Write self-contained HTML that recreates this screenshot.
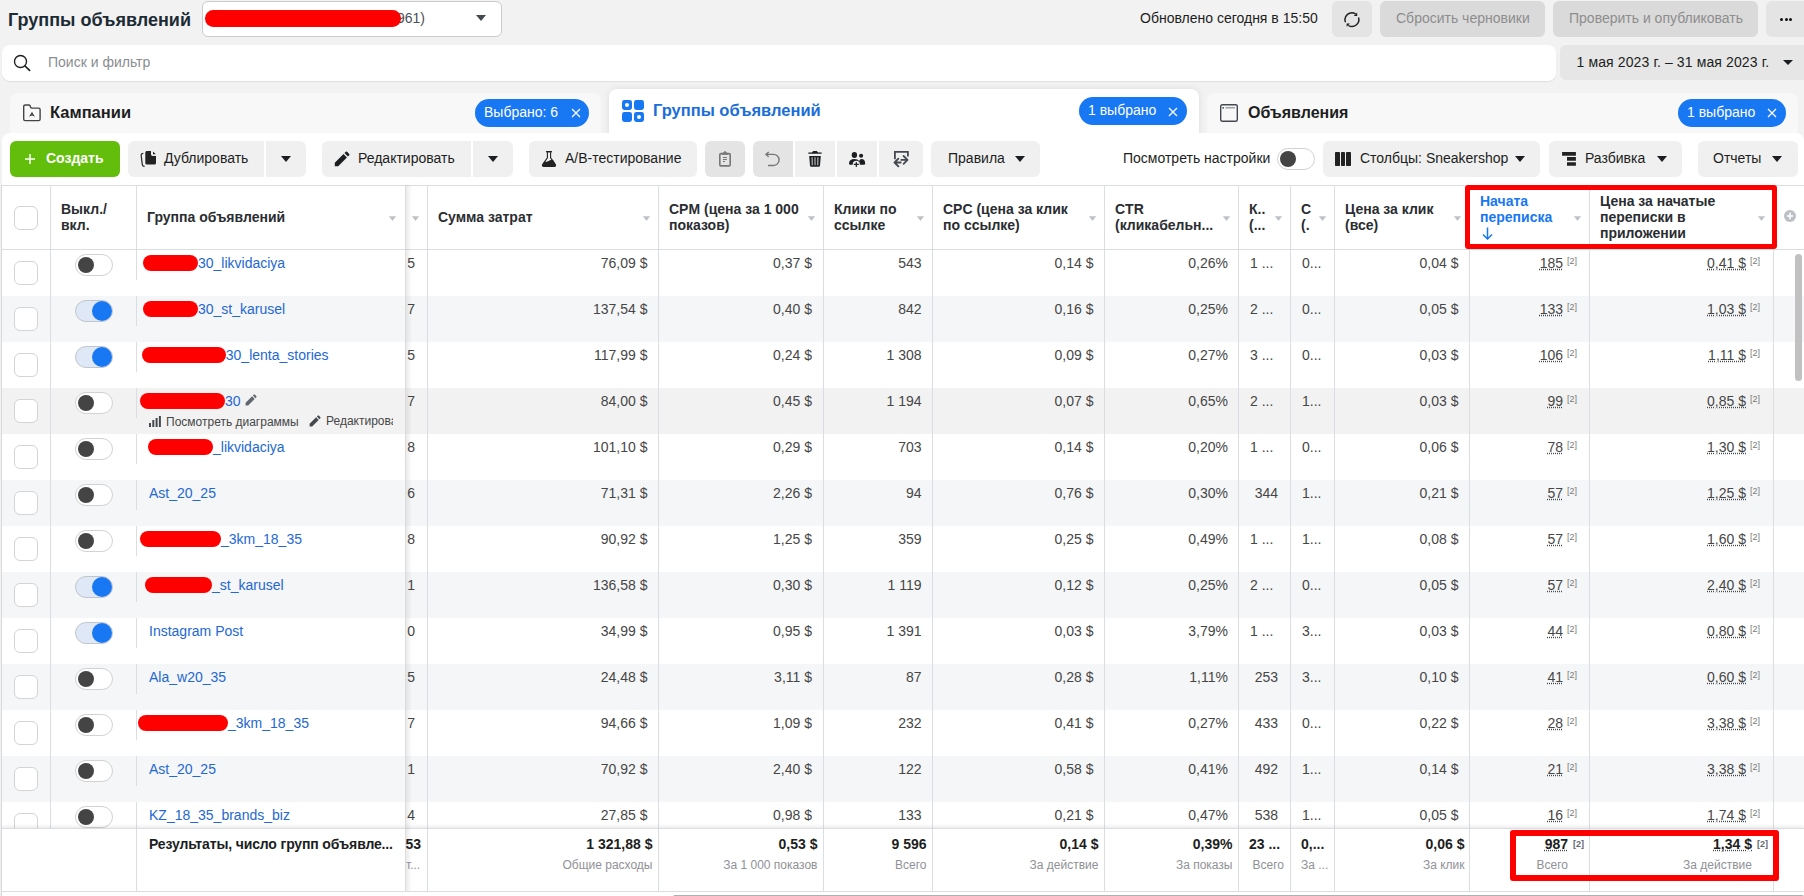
<!DOCTYPE html>
<html><head><meta charset="utf-8">
<style>
*{box-sizing:border-box;margin:0;padding:0}
html,body{width:1804px;height:896px;overflow:hidden;background:#f2f2f2;font-family:"Liberation Sans",sans-serif;color:#1c1e21;position:relative}
.a{position:absolute}
.t{position:absolute;white-space:nowrap}
</style></head><body>

<div class="t" style="left:8px;top:10.8px;font-size:18px;line-height:18px;font-weight:700;color:#1c2b33;">Группы объявлений</div>
<div class="a" style="left:202px;top:1px;width:300px;height:36px;background:#fff;border:1px solid #cccccc;border-radius:6px"></div>
<div class="t" style="left:397px;top:11.1px;font-size:14px;line-height:14px;font-weight:400;color:#4b4f56;">961)</div>
<div class="a" style="left:205px;top:10.3px;width:196px;height:16.3px;background:#f00;border-radius:8.2px"></div>
<svg class="a" style="left:476.0px;top:15.0px" width="10" height="6" viewBox="0 0 10 6"><path d="M0 0H10L5.0 6Z" fill="#444950"/></svg>
<div class="t" style="left:1140px;top:11.1px;font-size:14px;line-height:14px;font-weight:400;color:#1c1e21;">Обновлено сегодня в 15:50</div>
<div class="a" style="left:1332px;top:1px;width:40px;height:36px;background:#e4e4e4;border-radius:6px"></div>
<svg class="a" style="left:1343px;top:10.5px" width="18" height="18" viewBox="0 0 18 18"><path d="M2.5 11.3A6.9 6.9 0 0 1 12.6 2.9" fill="none" stroke="#1c1e21" stroke-width="1.45"/><path d="M15.5 6.5A6.9 6.9 0 0 1 5.4 14.5" fill="none" stroke="#1c1e21" stroke-width="1.45"/><path d="M14.2 1.6V5H10.8Z" fill="#1c1e21"/><path d="M3.6 15.8V12.4H7Z" fill="#1c1e21"/></svg>
<div class="a" style="left:1380px;top:1px;width:165px;height:36px;background:#dadada;border-radius:6px"></div>
<div class="t" style="left:1396px;top:11.1px;font-size:14px;line-height:14px;font-weight:400;color:#8d8d8d;">Сбросить черновики</div>
<div class="a" style="left:1553px;top:1px;width:205px;height:36px;background:#dadada;border-radius:6px"></div>
<div class="t" style="left:1569px;top:11.1px;font-size:14px;line-height:14px;font-weight:400;color:#8d8d8d;">Проверить и опубликовать</div>
<div class="a" style="left:1766px;top:1px;width:60px;height:36px;background:#e4e4e4;border-radius:6px"></div>
<div class="a" style="left:1780px;top:17.5px;width:3px;height:3px;background:#111;border-radius:50%"></div>
<div class="a" style="left:1784.6px;top:17.5px;width:3px;height:3px;background:#111;border-radius:50%"></div>
<div class="a" style="left:1789.2px;top:17.5px;width:3px;height:3px;background:#111;border-radius:50%"></div>
<div class="a" style="left:2px;top:45px;width:1554px;height:36px;background:#fff;border-radius:8px;box-shadow:0 1px 1px rgba(0,0,0,.08)"></div>
<svg class="a" style="left:13px;top:54px" width="19" height="19" viewBox="0 0 19 19"><circle cx="7.5" cy="7.5" r="6" fill="none" stroke="#1c1e21" stroke-width="1.35"/><path d="M12 12L16.6 16.3" stroke="#1c1e21" stroke-width="1.7" stroke-linecap="round"/></svg>
<div class="t" style="left:48px;top:55.1px;font-size:14px;line-height:14px;font-weight:400;color:#8a8d91;">Поиск и фильтр</div>
<div class="a" style="left:1560px;top:45px;width:260px;height:35px;background:#e6e6e6;border-radius:6px"></div>
<div class="t" style="left:1576.5px;top:55.1px;font-size:14px;line-height:14px;font-weight:400;color:#1c1e21;letter-spacing:0.12px">1 мая 2023 г. – 31 мая 2023 г.</div>
<svg class="a" style="left:1783.0px;top:59.5px" width="10" height="5" viewBox="0 0 10 5"><path d="M0 0H10L5.0 5Z" fill="#1c1e21"/></svg>
<div class="a" style="left:10px;top:93px;width:591px;height:45px;background:#f8f8f8;border-radius:8px 8px 0 0;box-shadow:inset 0 -5px 5px -3px rgba(0,0,0,.05)"></div>
<div class="a" style="left:609px;top:89px;width:590px;height:50px;background:#fff;border-radius:8px 8px 0 0;box-shadow:0 0 6px rgba(0,0,0,.09)"></div>
<div class="a" style="left:1207px;top:93px;width:591px;height:45px;background:#f8f8f8;border-radius:8px 8px 0 0;box-shadow:inset 0 -5px 5px -3px rgba(0,0,0,.05)"></div>
<div class="a" style="left:2px;top:133px;width:1802px;height:763px;background:#fff;border-radius:8px 8px 0 0"></div>
<div class="a" style="left:609px;top:125px;width:590px;height:12px;background:#fff;"></div>
<svg class="a" style="left:22px;top:103px" width="20" height="20" viewBox="0 0 20 20"><path d="M1.7 3.4Q1.7 1.95 3.15 1.95H6.9Q7.6 1.95 8 2.6L8.7 4.4Q9 5.1 9.8 5.1H16.65Q18.1 5.1 18.1 6.55V16.15Q18.1 17.6 16.65 17.6H3.15Q1.7 17.6 1.7 16.15Z" fill="none" stroke="#444" stroke-width="1.4"/><path d="M7 13.75L10 8.75L12.9 13.75L10 12.4Z" fill="#444"/></svg>
<div class="t" style="left:50px;top:104.0px;font-size:16.5px;line-height:16.5px;font-weight:700;color:#1c1e21;">Кампании</div>
<div class="a" style="left:475px;top:99px;width:114px;height:28px;background:#1877f2;border-radius:14px"></div>
<div class="t" style="left:484px;top:104.6px;font-size:14px;line-height:14px;font-weight:400;color:#fff;">Выбрано: 6</div>
<svg class="a" style="left:570.5px;top:108px" width="10" height="10" viewBox="0 0 10 10"><path d="M1 1L9 9M9 1L1 9" stroke="#fff" stroke-width="1.25"/></svg>
<svg class="a" style="left:621px;top:99px" width="24" height="24" viewBox="0 0 24 24"><rect x="1" y="1" width="10" height="10" rx="2.4" fill="#1877f2"/><rect x="13" y="1" width="10" height="10" rx="2.4" fill="#1877f2"/><rect x="1" y="13" width="10" height="10" rx="2.4" fill="#1877f2"/><rect x="13" y="13" width="10" height="10" rx="2.4" fill="#1877f2"/><circle cx="6" cy="6" r="2" fill="#fff"/><circle cx="18" cy="18" r="2" fill="#fff"/></svg>
<div class="t" style="left:653px;top:102.0px;font-size:16.5px;line-height:16.5px;font-weight:700;color:#1a6ed8;">Группы объявлений</div>
<div class="a" style="left:1079px;top:97px;width:108px;height:28px;background:#1877f2;border-radius:14px"></div>
<div class="t" style="left:1088px;top:102.7px;font-size:14px;line-height:14px;font-weight:400;color:#fff;">1 выбрано</div>
<svg class="a" style="left:1168px;top:106.5px" width="10" height="10" viewBox="0 0 10 10"><path d="M1 1L9 9M9 1L1 9" stroke="#fff" stroke-width="1.25"/></svg>
<svg class="a" style="left:1220px;top:104px" width="18" height="18" viewBox="0 0 18 18"><rect x="0.7" y="0.7" width="16.6" height="16.6" rx="1.5" fill="none" stroke="#444950" stroke-width="1.4"/><circle cx="3.2" cy="3.8" r="0.9" fill="#444950"/><path d="M5.5 3.8H15" stroke="#8a8d91" stroke-width="1.2"/></svg>
<div class="t" style="left:1248px;top:104.5px;font-size:16px;line-height:16px;font-weight:700;color:#1c1e21;">Объявления</div>
<div class="a" style="left:1678px;top:99px;width:108px;height:28px;background:#1877f2;border-radius:14px"></div>
<div class="t" style="left:1687px;top:104.6px;font-size:14px;line-height:14px;font-weight:400;color:#fff;">1 выбрано</div>
<svg class="a" style="left:1767px;top:108px" width="10" height="10" viewBox="0 0 10 10"><path d="M1 1L9 9M9 1L1 9" stroke="#fff" stroke-width="1.25"/></svg>
<div class="a" style="left:10px;top:141px;width:110px;height:36px;background:#63be0c;border-radius:6px"></div>
<svg class="a" style="left:25px;top:154px" width="10" height="10" viewBox="0 0 10 10"><path d="M5 0V10M0 5H10" stroke="#fff" stroke-width="1.5"/></svg>
<div class="t" style="left:46px;top:151.1px;font-size:14px;line-height:14px;font-weight:700;color:#fff;">Создать</div>
<div class="a" style="left:128px;top:141px;width:136px;height:36px;background:#f0f0f0;border-radius:6px 0 0 6px"></div>
<div class="a" style="left:266px;top:141px;width:40px;height:36px;background:#f0f0f0;border-radius:0 6px 6px 0"></div>
<svg class="a" style="left:140px;top:150px" width="17" height="18" viewBox="0 0 17 18"><path d="M5.3 2.6Q5.3 1.1 6.8 1.1H11V4.2Q11 5.9 12.7 5.9H16V13.1Q16 14.6 14.5 14.6H6.8Q5.3 14.6 5.3 13.1Z" fill="#222"/><path d="M13 1.4V4.2H15.8Z" fill="#222"/><path d="M3.3 3.3Q1 3.4 1.2 5.8L2.3 14.6Q2.6 16.4 4.6 16.4" fill="none" stroke="#222" stroke-width="1.2"/></svg>
<div class="t" style="left:164px;top:151.1px;font-size:14px;line-height:14px;font-weight:400;color:#1c1e21;">Дублировать</div>
<svg class="a" style="left:281.0px;top:156.0px" width="10" height="6" viewBox="0 0 10 6"><path d="M0 0H10L5.0 6Z" fill="#1c1e21"/></svg>
<div class="a" style="left:322px;top:141px;width:149px;height:36px;background:#f0f0f0;border-radius:6px 0 0 6px"></div>
<div class="a" style="left:473px;top:141px;width:40px;height:36px;background:#f0f0f0;border-radius:0 6px 6px 0"></div>
<svg class="a" style="left:334px;top:151px" width="16" height="16" viewBox="0 0 16 16"><path d="M0.8 11.8V15.2H4.2L12.9 6.5L9.5 3.1Z M13.9 5.5L15.2 4.2Q15.8 3.5 15.2 2.9L13.1 0.8Q12.5 0.2 11.8 0.8L10.5 2.1Z" fill="#1c1e21"/></svg>
<div class="t" style="left:358px;top:151.1px;font-size:14px;line-height:14px;font-weight:400;color:#1c1e21;">Редактировать</div>
<svg class="a" style="left:488.0px;top:156.0px" width="10" height="6" viewBox="0 0 10 6"><path d="M0 0H10L5.0 6Z" fill="#1c1e21"/></svg>
<div class="a" style="left:529px;top:141px;width:168px;height:36px;background:#f0f0f0;border-radius:6px"></div>
<svg class="a" style="left:541px;top:150px" width="16" height="18" viewBox="0 0 16 18"><path d="M5.6 1.8H10.4" stroke="#222" stroke-width="1.4" stroke-linecap="round"/><path d="M6.4 2.3V7.9L1.6 14.6Q0.9 16.4 2.8 16.4H13.2Q15.1 16.4 14.4 14.6L9.6 7.9V2.3" fill="none" stroke="#222" stroke-width="1.1"/><path d="M3.5 11.2Q5.5 12.6 8 10.8Q10.2 9.4 12.1 9.9L14.4 14.6Q15.1 16.4 13.2 16.4H2.8Q0.9 16.4 1.6 14.6Z" fill="#222"/></svg>
<div class="t" style="left:565px;top:151.1px;font-size:14px;line-height:14px;font-weight:400;color:#1c1e21;">A/B-тестирование</div>
<div class="a" style="left:705px;top:141px;width:40px;height:36px;background:#e4e4e4;border-radius:6px"></div>
<svg class="a" style="left:718px;top:150px" width="14" height="18" viewBox="0 0 14 18"><rect x="1.8" y="3.6" width="10.4" height="12.3" rx="1.2" fill="none" stroke="#777" stroke-width="1.6"/><path d="M4.4 4.2L7 1.6L9.6 4.2Z" fill="none" stroke="#777" stroke-width="1.3" stroke-linejoin="round"/><path d="M5 7.5H8.9M5 9.5H8.9M5 11.5H7" stroke="#777" stroke-width="1"/></svg>
<div class="a" style="left:753px;top:141px;width:40px;height:36px;background:#e4e4e4;border-radius:6px 0 0 6px"></div>
<svg class="a" style="left:765px;top:151px" width="17" height="16" viewBox="0 0 17 16"><path d="M1.5 3.4H8.5A5.55 5.55 0 0 1 8.5 14.5H3" fill="none" stroke="#777" stroke-width="1.4"/><path d="M3.7 0.9L1 3.4L3.7 5.8" fill="none" stroke="#777" stroke-width="1.4"/></svg>
<div class="a" style="left:795px;top:141px;width:40px;height:36px;background:#f0f0f0;"></div>
<svg class="a" style="left:808px;top:150px" width="14" height="18" viewBox="0 0 14 18"><path d="M3.6 2.9L5.2 1H8.8L10.4 2.9Z" fill="#1c1e21"/><path d="M0.8 3.1H13.2" stroke="#1c1e21" stroke-width="1.4" stroke-linecap="round"/><path d="M1.2 6H12.8L12 15.6Q11.9 16.8 10.7 16.8H3.3Q2.1 16.8 2 15.6Z" fill="#1c1e21"/><path d="M4.1 7.3L4.3 15.3M7 7.3V15.3M9.9 7.3L9.7 15.3" stroke="#b4b4b4" stroke-width="1.2"/></svg>
<div class="a" style="left:837px;top:141px;width:40px;height:36px;background:#f0f0f0;"></div>
<svg class="a" style="left:848px;top:151px" width="18" height="17" viewBox="0 0 18 17"><ellipse cx="6.4" cy="4" rx="2.7" ry="2.9" fill="#1c1e21"/><circle cx="13.1" cy="4.7" r="2.05" fill="#1c1e21"/><path d="M1 12.6Q1 8 6.5 8Q10 8 11.2 10Q12 8 13.3 8Q17 8 17.2 12.4Q17.2 13.8 15.8 13.8H2.2Q1 13.8 1 12.6Z" fill="#1c1e21"/><circle cx="8.3" cy="13.4" r="3.6" fill="#f0f0f0"/><path d="M8.3 10.9V16M5.8 13.4H10.8" stroke="#1c1e21" stroke-width="1.2"/></svg>
<div class="a" style="left:879px;top:141px;width:44px;height:36px;background:#f0f0f0;border-radius:0 6px 6px 0"></div>
<svg class="a" style="left:893px;top:150px" width="16" height="18" viewBox="0 0 16 18"><path d="M1.9 9.3V1.9H14.9V6.4" fill="none" stroke="#444950" stroke-width="1.8"/><path d="M8.3 9.9H14M10.6 6L14.5 9.9L10.6 13.8M7.7 12.5H2M5.4 8.6L1.5 12.5L5.4 16.4" fill="none" stroke="#444950" stroke-width="1.8" stroke-linecap="round" stroke-linejoin="round"/></svg>
<div class="a" style="left:931px;top:141px;width:109px;height:36px;background:#f0f0f0;border-radius:6px"></div>
<div class="t" style="left:948px;top:151.1px;font-size:14px;line-height:14px;font-weight:400;color:#1c1e21;">Правила</div>
<svg class="a" style="left:1015.0px;top:156.0px" width="10" height="6" viewBox="0 0 10 6"><path d="M0 0H10L5.0 6Z" fill="#1c1e21"/></svg>
<div class="t" style="left:1123px;top:151.1px;font-size:14px;line-height:14px;font-weight:400;color:#1c1e21;">Посмотреть настройки</div>
<div class="a" style="left:1277px;top:148px;width:38px;height:22px;background:#fff;border:1px solid #d2d2d2;border-radius:11px"></div>
<div class="a" style="left:1280px;top:151px;width:16px;height:16px;background:#444444;border-radius:50%"></div>
<div class="a" style="left:1323px;top:141px;width:217px;height:36px;background:#f0f0f0;border-radius:6px"></div>
<div class="a" style="left:1335.1px;top:152.2px;width:4.5px;height:13.6px;background:#222;border-radius:0.8px"></div>
<div class="a" style="left:1341.1px;top:152.2px;width:3.7px;height:13.6px;background:#222;border-radius:0.8px"></div>
<div class="a" style="left:1346.3px;top:152.2px;width:4.6px;height:13.6px;background:#222;border-radius:0.8px"></div>
<div class="t" style="left:1360px;top:151.1px;font-size:14px;line-height:14px;font-weight:400;color:#1c1e21;">Столбцы: Sneakershop</div>
<svg class="a" style="left:1515.0px;top:156.0px" width="10" height="6" viewBox="0 0 10 6"><path d="M0 0H10L5.0 6Z" fill="#1c1e21"/></svg>
<div class="a" style="left:1549px;top:141px;width:133px;height:36px;background:#f0f0f0;border-radius:6px"></div>
<svg class="a" style="left:1562px;top:151px" width="15" height="16" viewBox="0 0 15 16"><path d="M0.1 0.9H13.9V4.7H0.1Z M5 6H13.9V9.7H5Z M5 11.2H13.9V14.8H5Z" fill="#222"/></svg>
<div class="t" style="left:1585px;top:151.1px;font-size:14px;line-height:14px;font-weight:400;color:#1c1e21;">Разбивка</div>
<svg class="a" style="left:1657.0px;top:156.0px" width="10" height="6" viewBox="0 0 10 6"><path d="M0 0H10L5.0 6Z" fill="#1c1e21"/></svg>
<div class="a" style="left:1698px;top:141px;width:100px;height:36px;background:#f0f0f0;border-radius:6px"></div>
<div class="t" style="left:1713px;top:151.1px;font-size:14px;line-height:14px;font-weight:400;color:#1c1e21;">Отчеты</div>
<svg class="a" style="left:1772.0px;top:156.0px" width="10" height="6" viewBox="0 0 10 6"><path d="M0 0H10L5.0 6Z" fill="#1c1e21"/></svg>
<div class="a" style="left:2px;top:185px;width:1802px;height:65px;background:#fff;"></div>
<div class="a" style="left:2px;top:185px;width:1802px;height:1px;background:#dadde1;"></div>
<div class="a" style="left:2px;top:249px;width:1802px;height:1px;background:#dadde1;"></div>
<div class="a" style="left:2px;top:250px;width:1802px;height:46px;background:#fff;"></div>
<div class="a" style="left:2px;top:296px;width:1802px;height:46px;background:#f5f6f7;"></div>
<div class="a" style="left:2px;top:342px;width:1802px;height:46px;background:#fff;"></div>
<div class="a" style="left:2px;top:388px;width:1802px;height:46px;background:#f2f2f2;"></div>
<div class="a" style="left:2px;top:434px;width:1802px;height:46px;background:#fff;"></div>
<div class="a" style="left:2px;top:480px;width:1802px;height:46px;background:#f5f6f7;"></div>
<div class="a" style="left:2px;top:526px;width:1802px;height:46px;background:#fff;"></div>
<div class="a" style="left:2px;top:572px;width:1802px;height:46px;background:#f5f6f7;"></div>
<div class="a" style="left:2px;top:618px;width:1802px;height:46px;background:#fff;"></div>
<div class="a" style="left:2px;top:664px;width:1802px;height:46px;background:#f5f6f7;"></div>
<div class="a" style="left:2px;top:710px;width:1802px;height:46px;background:#fff;"></div>
<div class="a" style="left:2px;top:756px;width:1802px;height:46px;background:#f5f6f7;"></div>
<div class="a" style="left:2px;top:802px;width:1802px;height:46px;background:#fff;"></div>
<div class="a" style="left:50px;top:185px;width:1px;height:643px;background:#dadde1;"></div>
<div class="a" style="left:427px;top:185px;width:1px;height:643px;background:#dadde1;"></div>
<div class="a" style="left:658px;top:185px;width:1px;height:643px;background:#dadde1;"></div>
<div class="a" style="left:823px;top:185px;width:1px;height:643px;background:#dadde1;"></div>
<div class="a" style="left:932px;top:185px;width:1px;height:643px;background:#dadde1;"></div>
<div class="a" style="left:1104px;top:185px;width:1px;height:643px;background:#dadde1;"></div>
<div class="a" style="left:1238px;top:185px;width:1px;height:643px;background:#dadde1;"></div>
<div class="a" style="left:1290px;top:185px;width:1px;height:643px;background:#dadde1;"></div>
<div class="a" style="left:1334px;top:185px;width:1px;height:643px;background:#dadde1;"></div>
<div class="a" style="left:1469px;top:185px;width:1px;height:643px;background:#dadde1;"></div>
<div class="a" style="left:1589px;top:185px;width:1px;height:643px;background:#dadde1;"></div>
<div class="a" style="left:1773px;top:185px;width:1px;height:643px;background:#dadde1;"></div>
<div class="a" style="left:136px;top:250px;width:1px;height:30px;background:#dadde1;"></div>
<div class="a" style="left:136px;top:296px;width:1px;height:30px;background:#dadde1;"></div>
<div class="a" style="left:136px;top:342px;width:1px;height:30px;background:#dadde1;"></div>
<div class="a" style="left:136px;top:388px;width:1px;height:30px;background:#dadde1;"></div>
<div class="a" style="left:136px;top:434px;width:1px;height:30px;background:#dadde1;"></div>
<div class="a" style="left:136px;top:480px;width:1px;height:30px;background:#dadde1;"></div>
<div class="a" style="left:136px;top:526px;width:1px;height:30px;background:#dadde1;"></div>
<div class="a" style="left:136px;top:572px;width:1px;height:30px;background:#dadde1;"></div>
<div class="a" style="left:136px;top:618px;width:1px;height:30px;background:#dadde1;"></div>
<div class="a" style="left:136px;top:664px;width:1px;height:30px;background:#dadde1;"></div>
<div class="a" style="left:136px;top:710px;width:1px;height:30px;background:#dadde1;"></div>
<div class="a" style="left:136px;top:756px;width:1px;height:30px;background:#dadde1;"></div>
<div class="a" style="left:136px;top:802px;width:1px;height:30px;background:#dadde1;"></div>
<div class="a" style="left:136px;top:185px;width:1px;height:65px;background:#dadde1;"></div>
<div class="a" style="left:1px;top:185px;width:1px;height:711px;background:#d8d8d8;"></div>
<div class="a" style="left:14px;top:206px;width:24px;height:24px;background:#fff;border:1px solid #d4d4d4;border-radius:6px"></div>
<div class="t" style="left:61px;top:201.6px;font-size:14px;line-height:14px;font-weight:700;color:#2a2d31;">Выкл./</div>
<div class="t" style="left:61px;top:217.6px;font-size:14px;line-height:14px;font-weight:700;color:#2a2d31;">вкл.</div>
<div class="t" style="left:147px;top:210.1px;font-size:14px;line-height:14px;font-weight:700;color:#2a2d31;">Группа объявлений</div>
<svg class="a" style="left:388.5px;top:215.5px" width="7" height="5" viewBox="0 0 7 5"><path d="M0.3 0.4H6.7L3.5 4.6Z" fill="#bcc0c4" stroke="#bcc0c4" stroke-width="0.5" stroke-linejoin="round"/></svg>
<svg class="a" style="left:411.5px;top:215.5px" width="7" height="5" viewBox="0 0 7 5"><path d="M0.3 0.4H6.7L3.5 4.6Z" fill="#bcc0c4" stroke="#bcc0c4" stroke-width="0.5" stroke-linejoin="round"/></svg>
<div class="t" style="left:438px;top:210.1px;font-size:14px;line-height:14px;font-weight:700;color:#2a2d31;">Сумма затрат</div>
<svg class="a" style="left:642.5px;top:215.5px" width="7" height="5" viewBox="0 0 7 5"><path d="M0.3 0.4H6.7L3.5 4.6Z" fill="#bcc0c4" stroke="#bcc0c4" stroke-width="0.5" stroke-linejoin="round"/></svg>
<div class="t" style="left:669px;top:202.1px;font-size:14px;line-height:14px;font-weight:700;color:#2a2d31;">CPM (цена за 1 000</div>
<div class="t" style="left:669px;top:218.1px;font-size:14px;line-height:14px;font-weight:700;color:#2a2d31;">показов)</div>
<svg class="a" style="left:807.5px;top:215.5px" width="7" height="5" viewBox="0 0 7 5"><path d="M0.3 0.4H6.7L3.5 4.6Z" fill="#bcc0c4" stroke="#bcc0c4" stroke-width="0.5" stroke-linejoin="round"/></svg>
<div class="t" style="left:834px;top:202.1px;font-size:14px;line-height:14px;font-weight:700;color:#2a2d31;">Клики по</div>
<div class="t" style="left:834px;top:218.1px;font-size:14px;line-height:14px;font-weight:700;color:#2a2d31;">ссылке</div>
<svg class="a" style="left:916.5px;top:215.5px" width="7" height="5" viewBox="0 0 7 5"><path d="M0.3 0.4H6.7L3.5 4.6Z" fill="#bcc0c4" stroke="#bcc0c4" stroke-width="0.5" stroke-linejoin="round"/></svg>
<div class="t" style="left:943px;top:202.1px;font-size:14px;line-height:14px;font-weight:700;color:#2a2d31;">CPC (цена за клик</div>
<div class="t" style="left:943px;top:218.1px;font-size:14px;line-height:14px;font-weight:700;color:#2a2d31;">по ссылке)</div>
<svg class="a" style="left:1088.5px;top:215.5px" width="7" height="5" viewBox="0 0 7 5"><path d="M0.3 0.4H6.7L3.5 4.6Z" fill="#bcc0c4" stroke="#bcc0c4" stroke-width="0.5" stroke-linejoin="round"/></svg>
<div class="t" style="left:1115px;top:202.1px;font-size:14px;line-height:14px;font-weight:700;color:#2a2d31;">CTR</div>
<div class="t" style="left:1115px;top:218.1px;font-size:14px;line-height:14px;font-weight:700;color:#2a2d31;">(кликабельн...</div>
<svg class="a" style="left:1222.5px;top:215.5px" width="7" height="5" viewBox="0 0 7 5"><path d="M0.3 0.4H6.7L3.5 4.6Z" fill="#bcc0c4" stroke="#bcc0c4" stroke-width="0.5" stroke-linejoin="round"/></svg>
<div class="t" style="left:1249px;top:202.1px;font-size:14px;line-height:14px;font-weight:700;color:#2a2d31;">К..</div>
<div class="t" style="left:1249px;top:218.1px;font-size:14px;line-height:14px;font-weight:700;color:#2a2d31;">(...</div>
<svg class="a" style="left:1274.5px;top:215.5px" width="7" height="5" viewBox="0 0 7 5"><path d="M0.3 0.4H6.7L3.5 4.6Z" fill="#bcc0c4" stroke="#bcc0c4" stroke-width="0.5" stroke-linejoin="round"/></svg>
<div class="t" style="left:1301px;top:202.1px;font-size:14px;line-height:14px;font-weight:700;color:#2a2d31;">С</div>
<div class="t" style="left:1301px;top:218.1px;font-size:14px;line-height:14px;font-weight:700;color:#2a2d31;">(.</div>
<svg class="a" style="left:1318.5px;top:215.5px" width="7" height="5" viewBox="0 0 7 5"><path d="M0.3 0.4H6.7L3.5 4.6Z" fill="#bcc0c4" stroke="#bcc0c4" stroke-width="0.5" stroke-linejoin="round"/></svg>
<div class="t" style="left:1345px;top:202.1px;font-size:14px;line-height:14px;font-weight:700;color:#2a2d31;">Цена за клик</div>
<div class="t" style="left:1345px;top:218.1px;font-size:14px;line-height:14px;font-weight:700;color:#2a2d31;">(все)</div>
<svg class="a" style="left:1453.5px;top:215.5px" width="7" height="5" viewBox="0 0 7 5"><path d="M0.3 0.4H6.7L3.5 4.6Z" fill="#bcc0c4" stroke="#bcc0c4" stroke-width="0.5" stroke-linejoin="round"/></svg>
<div class="t" style="left:1480px;top:193.6px;font-size:14px;line-height:14px;font-weight:700;color:#1877f2;">Начата</div>
<div class="t" style="left:1480px;top:209.9px;font-size:14px;line-height:14px;font-weight:700;color:#1877f2;">переписка</div>
<svg class="a" style="left:1482px;top:227px" width="11" height="13" viewBox="0 0 11 13"><path d="M5.5 0.5V12M1 7.5L5.5 12L10 7.5" fill="none" stroke="#1877f2" stroke-width="1.5"/></svg>
<svg class="a" style="left:1573.5px;top:215.5px" width="7" height="5" viewBox="0 0 7 5"><path d="M0.3 0.4H6.7L3.5 4.6Z" fill="#bcc0c4" stroke="#bcc0c4" stroke-width="0.5" stroke-linejoin="round"/></svg>
<div class="t" style="left:1600px;top:193.6px;font-size:14px;line-height:14px;font-weight:700;color:#2a2d31;">Цена за начатые</div>
<div class="t" style="left:1600px;top:209.9px;font-size:14px;line-height:14px;font-weight:700;color:#2a2d31;">переписки в</div>
<div class="t" style="left:1600px;top:226.0px;font-size:14px;line-height:14px;font-weight:700;color:#2a2d31;">приложении</div>
<svg class="a" style="left:1757.5px;top:215.5px" width="7" height="5" viewBox="0 0 7 5"><path d="M0.3 0.4H6.7L3.5 4.6Z" fill="#bcc0c4" stroke="#bcc0c4" stroke-width="0.5" stroke-linejoin="round"/></svg>
<svg class="a" style="left:1784px;top:210px" width="12" height="12" viewBox="0 0 12 12"><circle cx="6" cy="6" r="6" fill="#bcc0c4"/><path d="M6 2.8V9.2M2.8 6H9.2" stroke="#fff" stroke-width="1.6"/></svg>
<div class="a" style="left:14px;top:261px;width:24px;height:24px;background:#fff;border:1px solid #d4d4d4;border-radius:6px"></div>
<div class="a" style="left:75px;top:254px;width:38px;height:22px;background:#fff;border:1px solid #d2d2d2;border-radius:11px"></div>
<div class="a" style="left:78px;top:257px;width:16px;height:16px;background:#444444;border-radius:50%"></div>
<div class="t" style="left:198px;top:256.1px;font-size:14px;line-height:14px;font-weight:400;color:#2468d4;">30_likvidaciya</div>
<div class="a" style="left:142.5px;top:255.1px;width:55.5px;height:15.8px;background:#f00;border-radius:8px"></div>
<div class="t" style="right:1389px;top:256.1px;font-size:14px;line-height:14px;font-weight:400;color:#464646;text-align:right;">5</div>
<div class="t" style="right:1156.5px;top:256.1px;font-size:14px;line-height:14px;font-weight:400;color:#464646;text-align:right;">76,09 $</div>
<div class="t" style="right:992px;top:256.1px;font-size:14px;line-height:14px;font-weight:400;color:#464646;text-align:right;">0,37 $</div>
<div class="t" style="right:882.5px;top:256.1px;font-size:14px;line-height:14px;font-weight:400;color:#464646;text-align:right;">543</div>
<div class="t" style="right:710.5px;top:256.1px;font-size:14px;line-height:14px;font-weight:400;color:#464646;text-align:right;">0,14 $</div>
<div class="t" style="right:576px;top:256.1px;font-size:14px;line-height:14px;font-weight:400;color:#464646;text-align:right;">0,26%</div>
<div class="t" style="left:1250px;top:256.1px;font-size:14px;line-height:14px;font-weight:400;color:#464646;">1 ...</div>
<div class="t" style="left:1302px;top:256.1px;font-size:14px;line-height:14px;font-weight:400;color:#464646;">0...</div>
<div class="t" style="right:345.5px;top:256.1px;font-size:14px;line-height:14px;font-weight:400;color:#464646;text-align:right;">0,04 $</div>
<div class="t" style="right:241px;top:256.1px;font-size:14px;line-height:14px;font-weight:400;color:#464646;text-align:right;text-decoration:underline dotted #444950;text-underline-offset:0.8px">185</div>
<div class="t" style="left:1567px;top:256.9px;font-size:9px;line-height:9px;font-weight:400;color:#777777;">[2]</div>
<div class="t" style="right:58px;top:256.1px;font-size:14px;line-height:14px;font-weight:400;color:#464646;text-align:right;text-decoration:underline dotted #444950;text-underline-offset:0.8px">0,41 $</div>
<div class="t" style="left:1750px;top:256.9px;font-size:9px;line-height:9px;font-weight:400;color:#777777;">[2]</div>
<div class="a" style="left:14px;top:307px;width:24px;height:24px;background:#fff;border:1px solid #d4d4d4;border-radius:6px"></div>
<div class="a" style="left:75px;top:300px;width:38px;height:22px;background:#dee8f6;border:1px solid #c2c6cc;border-radius:11px"></div>
<div class="a" style="left:92px;top:301px;width:20px;height:20px;background:#1877f2;border-radius:50%"></div>
<div class="t" style="left:198px;top:302.1px;font-size:14px;line-height:14px;font-weight:400;color:#2468d4;">30_st_karusel</div>
<div class="a" style="left:142.5px;top:301.1px;width:55.5px;height:15.8px;background:#f00;border-radius:8px"></div>
<div class="t" style="right:1389px;top:302.1px;font-size:14px;line-height:14px;font-weight:400;color:#464646;text-align:right;">7</div>
<div class="t" style="right:1156.5px;top:302.1px;font-size:14px;line-height:14px;font-weight:400;color:#464646;text-align:right;">137,54 $</div>
<div class="t" style="right:992px;top:302.1px;font-size:14px;line-height:14px;font-weight:400;color:#464646;text-align:right;">0,40 $</div>
<div class="t" style="right:882.5px;top:302.1px;font-size:14px;line-height:14px;font-weight:400;color:#464646;text-align:right;">842</div>
<div class="t" style="right:710.5px;top:302.1px;font-size:14px;line-height:14px;font-weight:400;color:#464646;text-align:right;">0,16 $</div>
<div class="t" style="right:576px;top:302.1px;font-size:14px;line-height:14px;font-weight:400;color:#464646;text-align:right;">0,25%</div>
<div class="t" style="left:1250px;top:302.1px;font-size:14px;line-height:14px;font-weight:400;color:#464646;">2 ...</div>
<div class="t" style="left:1302px;top:302.1px;font-size:14px;line-height:14px;font-weight:400;color:#464646;">0...</div>
<div class="t" style="right:345.5px;top:302.1px;font-size:14px;line-height:14px;font-weight:400;color:#464646;text-align:right;">0,05 $</div>
<div class="t" style="right:241px;top:302.1px;font-size:14px;line-height:14px;font-weight:400;color:#464646;text-align:right;text-decoration:underline dotted #444950;text-underline-offset:0.8px">133</div>
<div class="t" style="left:1567px;top:302.9px;font-size:9px;line-height:9px;font-weight:400;color:#777777;">[2]</div>
<div class="t" style="right:58px;top:302.1px;font-size:14px;line-height:14px;font-weight:400;color:#464646;text-align:right;text-decoration:underline dotted #444950;text-underline-offset:0.8px">1,03 $</div>
<div class="t" style="left:1750px;top:302.9px;font-size:9px;line-height:9px;font-weight:400;color:#777777;">[2]</div>
<div class="a" style="left:14px;top:353px;width:24px;height:24px;background:#fff;border:1px solid #d4d4d4;border-radius:6px"></div>
<div class="a" style="left:75px;top:346px;width:38px;height:22px;background:#dee8f6;border:1px solid #c2c6cc;border-radius:11px"></div>
<div class="a" style="left:92px;top:347px;width:20px;height:20px;background:#1877f2;border-radius:50%"></div>
<div class="t" style="left:225.8px;top:348.1px;font-size:14px;line-height:14px;font-weight:400;color:#2468d4;">30_lenta_stories</div>
<div class="a" style="left:141.7px;top:347.1px;width:84.10000000000002px;height:15.8px;background:#f00;border-radius:8px"></div>
<div class="t" style="right:1389px;top:348.1px;font-size:14px;line-height:14px;font-weight:400;color:#464646;text-align:right;">5</div>
<div class="t" style="right:1156.5px;top:348.1px;font-size:14px;line-height:14px;font-weight:400;color:#464646;text-align:right;">117,99 $</div>
<div class="t" style="right:992px;top:348.1px;font-size:14px;line-height:14px;font-weight:400;color:#464646;text-align:right;">0,24 $</div>
<div class="t" style="right:882.5px;top:348.1px;font-size:14px;line-height:14px;font-weight:400;color:#464646;text-align:right;">1 308</div>
<div class="t" style="right:710.5px;top:348.1px;font-size:14px;line-height:14px;font-weight:400;color:#464646;text-align:right;">0,09 $</div>
<div class="t" style="right:576px;top:348.1px;font-size:14px;line-height:14px;font-weight:400;color:#464646;text-align:right;">0,27%</div>
<div class="t" style="left:1250px;top:348.1px;font-size:14px;line-height:14px;font-weight:400;color:#464646;">3 ...</div>
<div class="t" style="left:1302px;top:348.1px;font-size:14px;line-height:14px;font-weight:400;color:#464646;">0...</div>
<div class="t" style="right:345.5px;top:348.1px;font-size:14px;line-height:14px;font-weight:400;color:#464646;text-align:right;">0,03 $</div>
<div class="t" style="right:241px;top:348.1px;font-size:14px;line-height:14px;font-weight:400;color:#464646;text-align:right;text-decoration:underline dotted #444950;text-underline-offset:0.8px">106</div>
<div class="t" style="left:1567px;top:348.9px;font-size:9px;line-height:9px;font-weight:400;color:#777777;">[2]</div>
<div class="t" style="right:58px;top:348.1px;font-size:14px;line-height:14px;font-weight:400;color:#464646;text-align:right;text-decoration:underline dotted #444950;text-underline-offset:0.8px">1,11 $</div>
<div class="t" style="left:1750px;top:348.9px;font-size:9px;line-height:9px;font-weight:400;color:#777777;">[2]</div>
<div class="a" style="left:14px;top:399px;width:24px;height:24px;background:#fff;border:1px solid #d4d4d4;border-radius:6px"></div>
<div class="a" style="left:75px;top:392px;width:38px;height:22px;background:#fff;border:1px solid #d2d2d2;border-radius:11px"></div>
<div class="a" style="left:78px;top:395px;width:16px;height:16px;background:#444444;border-radius:50%"></div>
<div class="t" style="left:225px;top:394.1px;font-size:14px;line-height:14px;font-weight:400;color:#2468d4;">30</div>
<div class="a" style="left:140px;top:393.1px;width:85px;height:15.8px;background:#f00;border-radius:8px"></div>
<div class="t" style="right:1389px;top:394.1px;font-size:14px;line-height:14px;font-weight:400;color:#464646;text-align:right;">7</div>
<div class="t" style="right:1156.5px;top:394.1px;font-size:14px;line-height:14px;font-weight:400;color:#464646;text-align:right;">84,00 $</div>
<div class="t" style="right:992px;top:394.1px;font-size:14px;line-height:14px;font-weight:400;color:#464646;text-align:right;">0,45 $</div>
<div class="t" style="right:882.5px;top:394.1px;font-size:14px;line-height:14px;font-weight:400;color:#464646;text-align:right;">1 194</div>
<div class="t" style="right:710.5px;top:394.1px;font-size:14px;line-height:14px;font-weight:400;color:#464646;text-align:right;">0,07 $</div>
<div class="t" style="right:576px;top:394.1px;font-size:14px;line-height:14px;font-weight:400;color:#464646;text-align:right;">0,65%</div>
<div class="t" style="left:1250px;top:394.1px;font-size:14px;line-height:14px;font-weight:400;color:#464646;">2 ...</div>
<div class="t" style="left:1302px;top:394.1px;font-size:14px;line-height:14px;font-weight:400;color:#464646;">1...</div>
<div class="t" style="right:345.5px;top:394.1px;font-size:14px;line-height:14px;font-weight:400;color:#464646;text-align:right;">0,03 $</div>
<div class="t" style="right:241px;top:394.1px;font-size:14px;line-height:14px;font-weight:400;color:#464646;text-align:right;text-decoration:underline dotted #444950;text-underline-offset:0.8px">99</div>
<div class="t" style="left:1567px;top:394.9px;font-size:9px;line-height:9px;font-weight:400;color:#777777;">[2]</div>
<div class="t" style="right:58px;top:394.1px;font-size:14px;line-height:14px;font-weight:400;color:#464646;text-align:right;text-decoration:underline dotted #444950;text-underline-offset:0.8px">0,85 $</div>
<div class="t" style="left:1750px;top:394.9px;font-size:9px;line-height:9px;font-weight:400;color:#777777;">[2]</div>
<div class="a" style="left:14px;top:445px;width:24px;height:24px;background:#fff;border:1px solid #d4d4d4;border-radius:6px"></div>
<div class="a" style="left:75px;top:438px;width:38px;height:22px;background:#fff;border:1px solid #d2d2d2;border-radius:11px"></div>
<div class="a" style="left:78px;top:441px;width:16px;height:16px;background:#444444;border-radius:50%"></div>
<div class="t" style="left:213px;top:440.1px;font-size:14px;line-height:14px;font-weight:400;color:#2468d4;">_likvidaciya</div>
<div class="a" style="left:148px;top:439.1px;width:65px;height:15.8px;background:#f00;border-radius:8px"></div>
<div class="t" style="right:1389px;top:440.1px;font-size:14px;line-height:14px;font-weight:400;color:#464646;text-align:right;">8</div>
<div class="t" style="right:1156.5px;top:440.1px;font-size:14px;line-height:14px;font-weight:400;color:#464646;text-align:right;">101,10 $</div>
<div class="t" style="right:992px;top:440.1px;font-size:14px;line-height:14px;font-weight:400;color:#464646;text-align:right;">0,29 $</div>
<div class="t" style="right:882.5px;top:440.1px;font-size:14px;line-height:14px;font-weight:400;color:#464646;text-align:right;">703</div>
<div class="t" style="right:710.5px;top:440.1px;font-size:14px;line-height:14px;font-weight:400;color:#464646;text-align:right;">0,14 $</div>
<div class="t" style="right:576px;top:440.1px;font-size:14px;line-height:14px;font-weight:400;color:#464646;text-align:right;">0,20%</div>
<div class="t" style="left:1250px;top:440.1px;font-size:14px;line-height:14px;font-weight:400;color:#464646;">1 ...</div>
<div class="t" style="left:1302px;top:440.1px;font-size:14px;line-height:14px;font-weight:400;color:#464646;">0...</div>
<div class="t" style="right:345.5px;top:440.1px;font-size:14px;line-height:14px;font-weight:400;color:#464646;text-align:right;">0,06 $</div>
<div class="t" style="right:241px;top:440.1px;font-size:14px;line-height:14px;font-weight:400;color:#464646;text-align:right;text-decoration:underline dotted #444950;text-underline-offset:0.8px">78</div>
<div class="t" style="left:1567px;top:440.9px;font-size:9px;line-height:9px;font-weight:400;color:#777777;">[2]</div>
<div class="t" style="right:58px;top:440.1px;font-size:14px;line-height:14px;font-weight:400;color:#464646;text-align:right;text-decoration:underline dotted #444950;text-underline-offset:0.8px">1,30 $</div>
<div class="t" style="left:1750px;top:440.9px;font-size:9px;line-height:9px;font-weight:400;color:#777777;">[2]</div>
<div class="a" style="left:14px;top:491px;width:24px;height:24px;background:#fff;border:1px solid #d4d4d4;border-radius:6px"></div>
<div class="a" style="left:75px;top:484px;width:38px;height:22px;background:#fff;border:1px solid #d2d2d2;border-radius:11px"></div>
<div class="a" style="left:78px;top:487px;width:16px;height:16px;background:#444444;border-radius:50%"></div>
<div class="t" style="left:149px;top:486.1px;font-size:14px;line-height:14px;font-weight:400;color:#2468d4;">Ast_20_25</div>
<div class="t" style="right:1389px;top:486.1px;font-size:14px;line-height:14px;font-weight:400;color:#464646;text-align:right;">6</div>
<div class="t" style="right:1156.5px;top:486.1px;font-size:14px;line-height:14px;font-weight:400;color:#464646;text-align:right;">71,31 $</div>
<div class="t" style="right:992px;top:486.1px;font-size:14px;line-height:14px;font-weight:400;color:#464646;text-align:right;">2,26 $</div>
<div class="t" style="right:882.5px;top:486.1px;font-size:14px;line-height:14px;font-weight:400;color:#464646;text-align:right;">94</div>
<div class="t" style="right:710.5px;top:486.1px;font-size:14px;line-height:14px;font-weight:400;color:#464646;text-align:right;">0,76 $</div>
<div class="t" style="right:576px;top:486.1px;font-size:14px;line-height:14px;font-weight:400;color:#464646;text-align:right;">0,30%</div>
<div class="t" style="right:526px;top:486.1px;font-size:14px;line-height:14px;font-weight:400;color:#464646;text-align:right;">344</div>
<div class="t" style="left:1302px;top:486.1px;font-size:14px;line-height:14px;font-weight:400;color:#464646;">1...</div>
<div class="t" style="right:345.5px;top:486.1px;font-size:14px;line-height:14px;font-weight:400;color:#464646;text-align:right;">0,21 $</div>
<div class="t" style="right:241px;top:486.1px;font-size:14px;line-height:14px;font-weight:400;color:#464646;text-align:right;text-decoration:underline dotted #444950;text-underline-offset:0.8px">57</div>
<div class="t" style="left:1567px;top:486.9px;font-size:9px;line-height:9px;font-weight:400;color:#777777;">[2]</div>
<div class="t" style="right:58px;top:486.1px;font-size:14px;line-height:14px;font-weight:400;color:#464646;text-align:right;text-decoration:underline dotted #444950;text-underline-offset:0.8px">1,25 $</div>
<div class="t" style="left:1750px;top:486.9px;font-size:9px;line-height:9px;font-weight:400;color:#777777;">[2]</div>
<div class="a" style="left:14px;top:537px;width:24px;height:24px;background:#fff;border:1px solid #d4d4d4;border-radius:6px"></div>
<div class="a" style="left:75px;top:530px;width:38px;height:22px;background:#fff;border:1px solid #d2d2d2;border-radius:11px"></div>
<div class="a" style="left:78px;top:533px;width:16px;height:16px;background:#444444;border-radius:50%"></div>
<div class="t" style="left:221px;top:532.1px;font-size:14px;line-height:14px;font-weight:400;color:#2468d4;">_3km_18_35</div>
<div class="a" style="left:140px;top:531.1px;width:81px;height:15.8px;background:#f00;border-radius:8px"></div>
<div class="t" style="right:1389px;top:532.1px;font-size:14px;line-height:14px;font-weight:400;color:#464646;text-align:right;">8</div>
<div class="t" style="right:1156.5px;top:532.1px;font-size:14px;line-height:14px;font-weight:400;color:#464646;text-align:right;">90,92 $</div>
<div class="t" style="right:992px;top:532.1px;font-size:14px;line-height:14px;font-weight:400;color:#464646;text-align:right;">1,25 $</div>
<div class="t" style="right:882.5px;top:532.1px;font-size:14px;line-height:14px;font-weight:400;color:#464646;text-align:right;">359</div>
<div class="t" style="right:710.5px;top:532.1px;font-size:14px;line-height:14px;font-weight:400;color:#464646;text-align:right;">0,25 $</div>
<div class="t" style="right:576px;top:532.1px;font-size:14px;line-height:14px;font-weight:400;color:#464646;text-align:right;">0,49%</div>
<div class="t" style="left:1250px;top:532.1px;font-size:14px;line-height:14px;font-weight:400;color:#464646;">1 ...</div>
<div class="t" style="left:1302px;top:532.1px;font-size:14px;line-height:14px;font-weight:400;color:#464646;">1...</div>
<div class="t" style="right:345.5px;top:532.1px;font-size:14px;line-height:14px;font-weight:400;color:#464646;text-align:right;">0,08 $</div>
<div class="t" style="right:241px;top:532.1px;font-size:14px;line-height:14px;font-weight:400;color:#464646;text-align:right;text-decoration:underline dotted #444950;text-underline-offset:0.8px">57</div>
<div class="t" style="left:1567px;top:532.9px;font-size:9px;line-height:9px;font-weight:400;color:#777777;">[2]</div>
<div class="t" style="right:58px;top:532.1px;font-size:14px;line-height:14px;font-weight:400;color:#464646;text-align:right;text-decoration:underline dotted #444950;text-underline-offset:0.8px">1,60 $</div>
<div class="t" style="left:1750px;top:532.9px;font-size:9px;line-height:9px;font-weight:400;color:#777777;">[2]</div>
<div class="a" style="left:14px;top:583px;width:24px;height:24px;background:#fff;border:1px solid #d4d4d4;border-radius:6px"></div>
<div class="a" style="left:75px;top:576px;width:38px;height:22px;background:#dee8f6;border:1px solid #c2c6cc;border-radius:11px"></div>
<div class="a" style="left:92px;top:577px;width:20px;height:20px;background:#1877f2;border-radius:50%"></div>
<div class="t" style="left:212px;top:578.1px;font-size:14px;line-height:14px;font-weight:400;color:#2468d4;">_st_karusel</div>
<div class="a" style="left:145px;top:577.1px;width:67px;height:15.8px;background:#f00;border-radius:8px"></div>
<div class="t" style="right:1389px;top:578.1px;font-size:14px;line-height:14px;font-weight:400;color:#464646;text-align:right;">1</div>
<div class="t" style="right:1156.5px;top:578.1px;font-size:14px;line-height:14px;font-weight:400;color:#464646;text-align:right;">136,58 $</div>
<div class="t" style="right:992px;top:578.1px;font-size:14px;line-height:14px;font-weight:400;color:#464646;text-align:right;">0,30 $</div>
<div class="t" style="right:882.5px;top:578.1px;font-size:14px;line-height:14px;font-weight:400;color:#464646;text-align:right;">1 119</div>
<div class="t" style="right:710.5px;top:578.1px;font-size:14px;line-height:14px;font-weight:400;color:#464646;text-align:right;">0,12 $</div>
<div class="t" style="right:576px;top:578.1px;font-size:14px;line-height:14px;font-weight:400;color:#464646;text-align:right;">0,25%</div>
<div class="t" style="left:1250px;top:578.1px;font-size:14px;line-height:14px;font-weight:400;color:#464646;">2 ...</div>
<div class="t" style="left:1302px;top:578.1px;font-size:14px;line-height:14px;font-weight:400;color:#464646;">0...</div>
<div class="t" style="right:345.5px;top:578.1px;font-size:14px;line-height:14px;font-weight:400;color:#464646;text-align:right;">0,05 $</div>
<div class="t" style="right:241px;top:578.1px;font-size:14px;line-height:14px;font-weight:400;color:#464646;text-align:right;text-decoration:underline dotted #444950;text-underline-offset:0.8px">57</div>
<div class="t" style="left:1567px;top:578.9px;font-size:9px;line-height:9px;font-weight:400;color:#777777;">[2]</div>
<div class="t" style="right:58px;top:578.1px;font-size:14px;line-height:14px;font-weight:400;color:#464646;text-align:right;text-decoration:underline dotted #444950;text-underline-offset:0.8px">2,40 $</div>
<div class="t" style="left:1750px;top:578.9px;font-size:9px;line-height:9px;font-weight:400;color:#777777;">[2]</div>
<div class="a" style="left:14px;top:629px;width:24px;height:24px;background:#fff;border:1px solid #d4d4d4;border-radius:6px"></div>
<div class="a" style="left:75px;top:622px;width:38px;height:22px;background:#dee8f6;border:1px solid #c2c6cc;border-radius:11px"></div>
<div class="a" style="left:92px;top:623px;width:20px;height:20px;background:#1877f2;border-radius:50%"></div>
<div class="t" style="left:149px;top:624.1px;font-size:14px;line-height:14px;font-weight:400;color:#2468d4;">Instagram Post</div>
<div class="t" style="right:1389px;top:624.1px;font-size:14px;line-height:14px;font-weight:400;color:#464646;text-align:right;">0</div>
<div class="t" style="right:1156.5px;top:624.1px;font-size:14px;line-height:14px;font-weight:400;color:#464646;text-align:right;">34,99 $</div>
<div class="t" style="right:992px;top:624.1px;font-size:14px;line-height:14px;font-weight:400;color:#464646;text-align:right;">0,95 $</div>
<div class="t" style="right:882.5px;top:624.1px;font-size:14px;line-height:14px;font-weight:400;color:#464646;text-align:right;">1 391</div>
<div class="t" style="right:710.5px;top:624.1px;font-size:14px;line-height:14px;font-weight:400;color:#464646;text-align:right;">0,03 $</div>
<div class="t" style="right:576px;top:624.1px;font-size:14px;line-height:14px;font-weight:400;color:#464646;text-align:right;">3,79%</div>
<div class="t" style="left:1250px;top:624.1px;font-size:14px;line-height:14px;font-weight:400;color:#464646;">1 ...</div>
<div class="t" style="left:1302px;top:624.1px;font-size:14px;line-height:14px;font-weight:400;color:#464646;">3...</div>
<div class="t" style="right:345.5px;top:624.1px;font-size:14px;line-height:14px;font-weight:400;color:#464646;text-align:right;">0,03 $</div>
<div class="t" style="right:241px;top:624.1px;font-size:14px;line-height:14px;font-weight:400;color:#464646;text-align:right;text-decoration:underline dotted #444950;text-underline-offset:0.8px">44</div>
<div class="t" style="left:1567px;top:624.9px;font-size:9px;line-height:9px;font-weight:400;color:#777777;">[2]</div>
<div class="t" style="right:58px;top:624.1px;font-size:14px;line-height:14px;font-weight:400;color:#464646;text-align:right;text-decoration:underline dotted #444950;text-underline-offset:0.8px">0,80 $</div>
<div class="t" style="left:1750px;top:624.9px;font-size:9px;line-height:9px;font-weight:400;color:#777777;">[2]</div>
<div class="a" style="left:14px;top:675px;width:24px;height:24px;background:#fff;border:1px solid #d4d4d4;border-radius:6px"></div>
<div class="a" style="left:75px;top:668px;width:38px;height:22px;background:#fff;border:1px solid #d2d2d2;border-radius:11px"></div>
<div class="a" style="left:78px;top:671px;width:16px;height:16px;background:#444444;border-radius:50%"></div>
<div class="t" style="left:149px;top:670.1px;font-size:14px;line-height:14px;font-weight:400;color:#2468d4;">Ala_w20_35</div>
<div class="t" style="right:1389px;top:670.1px;font-size:14px;line-height:14px;font-weight:400;color:#464646;text-align:right;">5</div>
<div class="t" style="right:1156.5px;top:670.1px;font-size:14px;line-height:14px;font-weight:400;color:#464646;text-align:right;">24,48 $</div>
<div class="t" style="right:992px;top:670.1px;font-size:14px;line-height:14px;font-weight:400;color:#464646;text-align:right;">3,11 $</div>
<div class="t" style="right:882.5px;top:670.1px;font-size:14px;line-height:14px;font-weight:400;color:#464646;text-align:right;">87</div>
<div class="t" style="right:710.5px;top:670.1px;font-size:14px;line-height:14px;font-weight:400;color:#464646;text-align:right;">0,28 $</div>
<div class="t" style="right:576px;top:670.1px;font-size:14px;line-height:14px;font-weight:400;color:#464646;text-align:right;">1,11%</div>
<div class="t" style="right:526px;top:670.1px;font-size:14px;line-height:14px;font-weight:400;color:#464646;text-align:right;">253</div>
<div class="t" style="left:1302px;top:670.1px;font-size:14px;line-height:14px;font-weight:400;color:#464646;">3...</div>
<div class="t" style="right:345.5px;top:670.1px;font-size:14px;line-height:14px;font-weight:400;color:#464646;text-align:right;">0,10 $</div>
<div class="t" style="right:241px;top:670.1px;font-size:14px;line-height:14px;font-weight:400;color:#464646;text-align:right;text-decoration:underline dotted #444950;text-underline-offset:0.8px">41</div>
<div class="t" style="left:1567px;top:670.9px;font-size:9px;line-height:9px;font-weight:400;color:#777777;">[2]</div>
<div class="t" style="right:58px;top:670.1px;font-size:14px;line-height:14px;font-weight:400;color:#464646;text-align:right;text-decoration:underline dotted #444950;text-underline-offset:0.8px">0,60 $</div>
<div class="t" style="left:1750px;top:670.9px;font-size:9px;line-height:9px;font-weight:400;color:#777777;">[2]</div>
<div class="a" style="left:14px;top:721px;width:24px;height:24px;background:#fff;border:1px solid #d4d4d4;border-radius:6px"></div>
<div class="a" style="left:75px;top:714px;width:38px;height:22px;background:#fff;border:1px solid #d2d2d2;border-radius:11px"></div>
<div class="a" style="left:78px;top:717px;width:16px;height:16px;background:#444444;border-radius:50%"></div>
<div class="t" style="left:228px;top:716.1px;font-size:14px;line-height:14px;font-weight:400;color:#2468d4;">_3km_18_35</div>
<div class="a" style="left:138px;top:715.1px;width:90px;height:15.8px;background:#f00;border-radius:8px"></div>
<div class="t" style="right:1389px;top:716.1px;font-size:14px;line-height:14px;font-weight:400;color:#464646;text-align:right;">7</div>
<div class="t" style="right:1156.5px;top:716.1px;font-size:14px;line-height:14px;font-weight:400;color:#464646;text-align:right;">94,66 $</div>
<div class="t" style="right:992px;top:716.1px;font-size:14px;line-height:14px;font-weight:400;color:#464646;text-align:right;">1,09 $</div>
<div class="t" style="right:882.5px;top:716.1px;font-size:14px;line-height:14px;font-weight:400;color:#464646;text-align:right;">232</div>
<div class="t" style="right:710.5px;top:716.1px;font-size:14px;line-height:14px;font-weight:400;color:#464646;text-align:right;">0,41 $</div>
<div class="t" style="right:576px;top:716.1px;font-size:14px;line-height:14px;font-weight:400;color:#464646;text-align:right;">0,27%</div>
<div class="t" style="right:526px;top:716.1px;font-size:14px;line-height:14px;font-weight:400;color:#464646;text-align:right;">433</div>
<div class="t" style="left:1302px;top:716.1px;font-size:14px;line-height:14px;font-weight:400;color:#464646;">0...</div>
<div class="t" style="right:345.5px;top:716.1px;font-size:14px;line-height:14px;font-weight:400;color:#464646;text-align:right;">0,22 $</div>
<div class="t" style="right:241px;top:716.1px;font-size:14px;line-height:14px;font-weight:400;color:#464646;text-align:right;text-decoration:underline dotted #444950;text-underline-offset:0.8px">28</div>
<div class="t" style="left:1567px;top:716.9px;font-size:9px;line-height:9px;font-weight:400;color:#777777;">[2]</div>
<div class="t" style="right:58px;top:716.1px;font-size:14px;line-height:14px;font-weight:400;color:#464646;text-align:right;text-decoration:underline dotted #444950;text-underline-offset:0.8px">3,38 $</div>
<div class="t" style="left:1750px;top:716.9px;font-size:9px;line-height:9px;font-weight:400;color:#777777;">[2]</div>
<div class="a" style="left:14px;top:767px;width:24px;height:24px;background:#fff;border:1px solid #d4d4d4;border-radius:6px"></div>
<div class="a" style="left:75px;top:760px;width:38px;height:22px;background:#fff;border:1px solid #d2d2d2;border-radius:11px"></div>
<div class="a" style="left:78px;top:763px;width:16px;height:16px;background:#444444;border-radius:50%"></div>
<div class="t" style="left:149px;top:762.1px;font-size:14px;line-height:14px;font-weight:400;color:#2468d4;">Ast_20_25</div>
<div class="t" style="right:1389px;top:762.1px;font-size:14px;line-height:14px;font-weight:400;color:#464646;text-align:right;">1</div>
<div class="t" style="right:1156.5px;top:762.1px;font-size:14px;line-height:14px;font-weight:400;color:#464646;text-align:right;">70,92 $</div>
<div class="t" style="right:992px;top:762.1px;font-size:14px;line-height:14px;font-weight:400;color:#464646;text-align:right;">2,40 $</div>
<div class="t" style="right:882.5px;top:762.1px;font-size:14px;line-height:14px;font-weight:400;color:#464646;text-align:right;">122</div>
<div class="t" style="right:710.5px;top:762.1px;font-size:14px;line-height:14px;font-weight:400;color:#464646;text-align:right;">0,58 $</div>
<div class="t" style="right:576px;top:762.1px;font-size:14px;line-height:14px;font-weight:400;color:#464646;text-align:right;">0,41%</div>
<div class="t" style="right:526px;top:762.1px;font-size:14px;line-height:14px;font-weight:400;color:#464646;text-align:right;">492</div>
<div class="t" style="left:1302px;top:762.1px;font-size:14px;line-height:14px;font-weight:400;color:#464646;">1...</div>
<div class="t" style="right:345.5px;top:762.1px;font-size:14px;line-height:14px;font-weight:400;color:#464646;text-align:right;">0,14 $</div>
<div class="t" style="right:241px;top:762.1px;font-size:14px;line-height:14px;font-weight:400;color:#464646;text-align:right;text-decoration:underline dotted #444950;text-underline-offset:0.8px">21</div>
<div class="t" style="left:1567px;top:762.9px;font-size:9px;line-height:9px;font-weight:400;color:#777777;">[2]</div>
<div class="t" style="right:58px;top:762.1px;font-size:14px;line-height:14px;font-weight:400;color:#464646;text-align:right;text-decoration:underline dotted #444950;text-underline-offset:0.8px">3,38 $</div>
<div class="t" style="left:1750px;top:762.9px;font-size:9px;line-height:9px;font-weight:400;color:#777777;">[2]</div>
<div class="a" style="left:14px;top:813px;width:24px;height:24px;background:#fff;border:1px solid #d4d4d4;border-radius:6px"></div>
<div class="a" style="left:75px;top:806px;width:38px;height:22px;background:#fff;border:1px solid #d2d2d2;border-radius:11px"></div>
<div class="a" style="left:78px;top:809px;width:16px;height:16px;background:#444444;border-radius:50%"></div>
<div class="t" style="left:149px;top:808.1px;font-size:14px;line-height:14px;font-weight:400;color:#2468d4;">KZ_18_35_brands_biz</div>
<div class="t" style="right:1389px;top:808.1px;font-size:14px;line-height:14px;font-weight:400;color:#464646;text-align:right;">4</div>
<div class="t" style="right:1156.5px;top:808.1px;font-size:14px;line-height:14px;font-weight:400;color:#464646;text-align:right;">27,85 $</div>
<div class="t" style="right:992px;top:808.1px;font-size:14px;line-height:14px;font-weight:400;color:#464646;text-align:right;">0,98 $</div>
<div class="t" style="right:882.5px;top:808.1px;font-size:14px;line-height:14px;font-weight:400;color:#464646;text-align:right;">133</div>
<div class="t" style="right:710.5px;top:808.1px;font-size:14px;line-height:14px;font-weight:400;color:#464646;text-align:right;">0,21 $</div>
<div class="t" style="right:576px;top:808.1px;font-size:14px;line-height:14px;font-weight:400;color:#464646;text-align:right;">0,47%</div>
<div class="t" style="right:526px;top:808.1px;font-size:14px;line-height:14px;font-weight:400;color:#464646;text-align:right;">538</div>
<div class="t" style="left:1302px;top:808.1px;font-size:14px;line-height:14px;font-weight:400;color:#464646;">1...</div>
<div class="t" style="right:345.5px;top:808.1px;font-size:14px;line-height:14px;font-weight:400;color:#464646;text-align:right;">0,05 $</div>
<div class="t" style="right:241px;top:808.1px;font-size:14px;line-height:14px;font-weight:400;color:#464646;text-align:right;text-decoration:underline dotted #444950;text-underline-offset:0.8px">16</div>
<div class="t" style="left:1567px;top:808.9px;font-size:9px;line-height:9px;font-weight:400;color:#777777;">[2]</div>
<div class="t" style="right:58px;top:808.1px;font-size:14px;line-height:14px;font-weight:400;color:#464646;text-align:right;text-decoration:underline dotted #444950;text-underline-offset:0.8px">1,74 $</div>
<div class="t" style="left:1750px;top:808.9px;font-size:9px;line-height:9px;font-weight:400;color:#777777;">[2]</div>
<svg class="a" style="left:245px;top:394px" width="12" height="12" viewBox="0 0 16 16"><path d="M0.8 11.8V15.2H4.2L12.9 6.5L9.5 3.1Z M13.9 5.5L15.2 4.2Q15.8 3.5 15.2 2.9L13.1 0.8Q12.5 0.2 11.8 0.8L10.5 2.1Z" fill="#606770"/></svg>
<svg class="a" style="left:149px;top:416px" width="12" height="11" viewBox="0 0 12 11"><path d="M0 7H2V11H0Z M3.3 4H5.3V11H3.3Z M6.6 2H8.6V11H6.6Z M9.9 0H11.9V11H9.9Z" fill="#444950"/></svg>
<div class="t" style="left:166px;top:415.8px;font-size:12px;line-height:12px;font-weight:400;color:#464646;">Посмотреть диаграммы</div>
<svg class="a" style="left:309px;top:415px" width="12" height="12" viewBox="0 0 16 16"><path d="M0.8 11.8V15.2H4.2L12.9 6.5L9.5 3.1Z M13.9 5.5L15.2 4.2Q15.8 3.5 15.2 2.9L13.1 0.8Q12.5 0.2 11.8 0.8L10.5 2.1Z" fill="#444950"/></svg>
<div class="a" style="left:326px;top:416px;width:67px;height:14px;overflow:hidden"><div class="t" style="left:0;top:-0.6px;font-size:12px;line-height:12px;color:#464646">Редактировать</div></div>
<div class="a" style="left:405px;top:185px;width:1px;height:706px;background:#dcdcdc;"></div>
<div class="a" style="left:406px;top:185px;width:6px;height:706px;background:transparent;background:linear-gradient(to right,rgba(0,0,0,.08),rgba(0,0,0,0))"></div>
<div class="a" style="left:2px;top:828px;width:1802px;height:63px;background:#fff;box-shadow:0 -2px 3px rgba(0,0,0,.07)"></div>
<div class="a" style="left:2px;top:828px;width:1802px;height:1px;background:#dadde1;"></div>
<div class="a" style="left:2px;top:891px;width:1802px;height:1px;background:#dadde1;"></div>
<div class="a" style="left:136px;top:828px;width:1px;height:63px;background:#dadde1;"></div>
<div class="a" style="left:427px;top:828px;width:1px;height:63px;background:#dadde1;"></div>
<div class="a" style="left:658px;top:828px;width:1px;height:63px;background:#dadde1;"></div>
<div class="a" style="left:823px;top:828px;width:1px;height:63px;background:#dadde1;"></div>
<div class="a" style="left:932px;top:828px;width:1px;height:63px;background:#dadde1;"></div>
<div class="a" style="left:1104px;top:828px;width:1px;height:63px;background:#dadde1;"></div>
<div class="a" style="left:1238px;top:828px;width:1px;height:63px;background:#dadde1;"></div>
<div class="a" style="left:1290px;top:828px;width:1px;height:63px;background:#dadde1;"></div>
<div class="a" style="left:1334px;top:828px;width:1px;height:63px;background:#dadde1;"></div>
<div class="a" style="left:1469px;top:828px;width:1px;height:63px;background:#dadde1;"></div>
<div class="a" style="left:1589px;top:828px;width:1px;height:63px;background:#dadde1;"></div>
<div class="a" style="left:1773px;top:828px;width:1px;height:63px;background:#dadde1;"></div>
<div class="a" style="left:405px;top:828px;width:1px;height:63px;background:#dcdcdc;"></div>
<div class="a" style="left:406px;top:828px;width:6px;height:63px;background:transparent;background:linear-gradient(to right,rgba(0,0,0,.08),rgba(0,0,0,0))"></div>
<div class="a" style="left:1px;top:828px;width:1px;height:68px;background:#d8d8d8;"></div>
<div class="t" style="left:149px;top:836.8px;font-size:14px;line-height:14px;font-weight:700;color:#1c1e21;letter-spacing:-0.15px">Результаты, число групп объявле...</div>
<div class="a" style="left:406px;top:836px;width:21px;height:40px;overflow:hidden"><div class="t" style="right:6px;top:0.8px;font-size:14px;line-height:14px;font-weight:700;color:#1c1e21">53</div><div class="t" style="left:0px;top:22.8px;font-size:12px;line-height:12px;color:#8f9196">т...</div></div>
<div class="t" style="right:1151.5px;top:836.8px;font-size:14px;line-height:14px;font-weight:700;color:#1c1e21;text-align:right;">1 321,88 $</div>
<div class="t" style="right:1151.5px;top:858.8px;font-size:12px;line-height:12px;font-weight:400;color:#8f9196;text-align:right;">Общие расходы</div>
<div class="t" style="right:986.5px;top:836.8px;font-size:14px;line-height:14px;font-weight:700;color:#1c1e21;text-align:right;">0,53 $</div>
<div class="t" style="right:986.5px;top:858.8px;font-size:12px;line-height:12px;font-weight:400;color:#8f9196;text-align:right;">За 1 000 показов</div>
<div class="t" style="right:877.5px;top:836.8px;font-size:14px;line-height:14px;font-weight:700;color:#1c1e21;text-align:right;">9 596</div>
<div class="t" style="right:877.5px;top:858.8px;font-size:12px;line-height:12px;font-weight:400;color:#8f9196;text-align:right;">Всего</div>
<div class="t" style="right:705.5px;top:836.8px;font-size:14px;line-height:14px;font-weight:700;color:#1c1e21;text-align:right;">0,14 $</div>
<div class="t" style="right:705.5px;top:858.8px;font-size:12px;line-height:12px;font-weight:400;color:#8f9196;text-align:right;">За действие</div>
<div class="t" style="right:571.5px;top:836.8px;font-size:14px;line-height:14px;font-weight:700;color:#1c1e21;text-align:right;">0,39%</div>
<div class="t" style="right:571.5px;top:858.8px;font-size:12px;line-height:12px;font-weight:400;color:#8f9196;text-align:right;">За показы</div>
<div class="t" style="left:1249px;top:836.8px;font-size:14px;line-height:14px;font-weight:700;color:#1c1e21;">23 ...</div>
<div class="t" style="right:520px;top:858.8px;font-size:12px;line-height:12px;font-weight:400;color:#8f9196;text-align:right;">Всего</div>
<div class="t" style="left:1301px;top:836.8px;font-size:14px;line-height:14px;font-weight:700;color:#1c1e21;">0,...</div>
<div class="t" style="left:1301px;top:858.8px;font-size:12px;line-height:12px;font-weight:400;color:#8f9196;">За ...</div>
<div class="t" style="right:339.5px;top:836.8px;font-size:14px;line-height:14px;font-weight:700;color:#1c1e21;text-align:right;">0,06 $</div>
<div class="t" style="right:339.5px;top:858.8px;font-size:12px;line-height:12px;font-weight:400;color:#8f9196;text-align:right;">За клик</div>
<div class="t" style="right:236px;top:836.8px;font-size:14px;line-height:14px;font-weight:700;color:#1c1e21;text-align:right;text-decoration:underline dotted #444950;text-underline-offset:0.5px">987</div>
<div class="t" style="left:1573px;top:839.6px;font-size:9px;line-height:9px;font-weight:700;color:#606770;">[2]</div>
<div class="t" style="right:236px;top:858.8px;font-size:12px;line-height:12px;font-weight:400;color:#8f9196;text-align:right;">Всего</div>
<div class="t" style="right:52px;top:836.8px;font-size:14px;line-height:14px;font-weight:700;color:#1c1e21;text-align:right;text-decoration:underline dotted #444950;text-underline-offset:0.5px">1,34 $</div>
<div class="t" style="left:1757px;top:839.6px;font-size:9px;line-height:9px;font-weight:700;color:#606770;">[2]</div>
<div class="t" style="right:52px;top:858.8px;font-size:12px;line-height:12px;font-weight:400;color:#8f9196;text-align:right;">За действие</div>
<div class="a" style="left:1795px;top:254px;width:7px;height:127px;background:#c1c1c1;border-radius:4px"></div>
<div class="a" style="left:673px;top:894.6px;width:1131px;height:2px;background:#b0b0b0;border-radius:2px 2px 0 0"></div>
<div class="a" style="left:1465px;top:185px;width:312px;height:64px;background:transparent;border:5.5px solid #f00;border-radius:3px"></div>
<div class="a" style="left:1510px;top:830px;width:269px;height:51px;background:transparent;border:6px solid #f00;border-radius:3px"></div>
</body></html>
